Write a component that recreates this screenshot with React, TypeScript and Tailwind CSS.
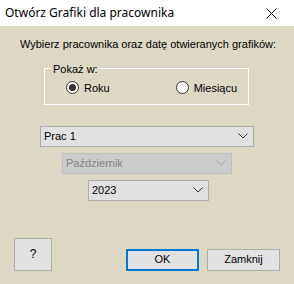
const Chevron = ({ color = '#333' }: { color?: string }) => (
  <svg width="10" height="6" viewBox="0 0 10 6" fill="none">
    <path d="M0.5 0.5 L5 5 L9.5 0.5" stroke={color} strokeWidth="1" />
  </svg>
);

function Radio({ checked, label }: { checked: boolean; label: string }) {
  return (
    <div className="flex items-center gap-[5px]">
      <div className="w-[13px] h-[13px] rounded-full border border-[#333333] bg-white flex items-center justify-center">
        {checked && <div className="w-[7px] h-[7px] rounded-full bg-[#333333]" />}
      </div>
      <span>{label}</span>
    </div>
  );
}

function Combo({ value, width, disabled }: { value: string; width: string; disabled?: boolean }) {
  return (
    <div
      className={`${width} h-[21px] flex items-center justify-between pl-[3px] pr-[5px] border ${
        disabled ? 'bg-[#cccccc] border-[#bfbfbf] text-[#838383]' : 'bg-[#e1e1e1] border-[#adadad] text-black'
      }`}
    >
      <span>{value}</span>
      <Chevron color={disabled ? '#a0a0a0' : '#333333'} />
    </div>
  );
}

export default function App() {
  return (
    <div className="w-[294px] h-[284px] flex flex-col bg-[#ddd8c4] text-[11px] text-black" style={{ fontFamily: '"Liberation Sans", Arial, sans-serif' }}>
      <div className="h-[26px] bg-white flex items-center justify-between pl-[5px] pr-[17px]">
        <span className="text-[12px] text-black" style={{ fontFamily: '"Noto Sans", sans-serif' }}>
          Otwórz Grafiki dla pracownika
        </span>
        <svg width="11" height="11" viewBox="0 0 11 11">
          <path d="M0.5 0.5 L10.5 10.5 M10.5 0.5 L0.5 10.5" stroke="#111" strokeWidth="1" />
        </svg>
      </div>
      <div className="flex-1 flex flex-col">
        <div className="mt-[10px] text-center pl-[2px]">Wybierz pracownika oraz datę otwieranych grafików:</div>
        <fieldset className="ml-[44px] mt-[10px] w-[205px] h-[42px] border border-white">
          <legend className="ml-[6px] px-[2px] leading-[12px]">Pokaż w:</legend>
          <div className="flex items-center mt-[5px] pl-[21px]">
            <Radio checked label="Roku" />
            <div className="ml-[66px]">
              <Radio checked={false} label="Miesiącu" />
            </div>
          </div>
        </fieldset>
        <div className="ml-[40px] mt-[21px]">
          <Combo value="Prac 1" width="w-[214px]" />
        </div>
        <div className="ml-[62px] mt-[6px]">
          <Combo value="Październik" width="w-[170px]" disabled />
        </div>
        <div className="ml-[88px] mt-[6px]">
          <Combo value="2023" width="w-[121px]" />
        </div>
        <div className="flex items-end mt-[37px] pl-[14px] pr-[14px]">
          <button className="w-[38px] h-[33px] bg-[#e1e1e1] border border-[#adadad] text-[12px]">?</button>
          <div className="ml-auto flex gap-[8px]">
            <button className="w-[73px] h-[22px] bg-[#e1e1e1] border-2 border-[#0078d7]">OK</button>
            <button className="w-[73px] h-[22px] bg-[#e1e1e1] border border-[#adadad]">Zamknij</button>
          </div>
        </div>
      </div>
    </div>
  );
}
